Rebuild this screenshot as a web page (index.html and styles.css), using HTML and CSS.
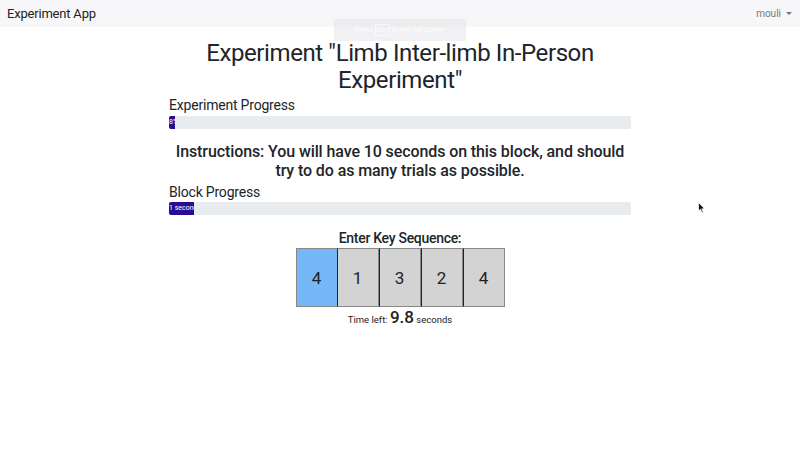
FILE: index.html
```html
<!DOCTYPE html>
<html>
<head>
<meta charset="utf-8">
<link rel="stylesheet" href="styles.css">
</head>
<body>
<nav class="navbar">
  <span class="brand">Experiment App</span>
  <span class="user">mouli <span class="caret"></span></span>
</nav>
<div class="toast">Press <span class="key">Esc</span> to exit full screen</div>
<main class="container">
  <h1 class="title">Experiment "Limb Inter-limb In-Person Experiment"</h1>
  <h2 class="label">Experiment Progress</h2>
  <div class="progress"><div class="bar" style="width:6px">8%</div></div>
  <h3 class="instructions">Instructions: You will have 10 seconds on this block, and should try to do as many trials as possible.</h3>
  <h2 class="label label-block">Block Progress</h2>
  <div class="progress"><div class="bar" style="width:25px">1 seconds</div></div>
  <h2 class="seq-title">Enter Key Sequence:</h2>
  <div class="keys">
    <div class="key-box active">4</div>
    <div class="key-box">1</div>
    <div class="key-box">3</div>
    <div class="key-box">2</div>
    <div class="key-box">4</div>
  </div>
  <p class="timer">Time left: <span class="time">9.8</span> seconds</p>
</main>
<svg class="cursor" width="8" height="12" viewBox="0 0 8 12"><path d="M0.5 0.5 L0.5 9 L2.5 7.2 L4 10.8 L5.3 10.2 L3.9 6.8 L6.6 6.8 Z" fill="#111" stroke="#fff" stroke-width="0.8"/></svg>
</body>
</html>
```
FILE: styles.css
```css
html, body {
  margin: 0;
  padding: 0;
  background: #ffffff;
  font-family: Roboto, "Liberation Sans", sans-serif;
  color: #212529;
}
.navbar {
  height: 27px;
  background: #f7f7f9;
  display: flex;
  align-items: center;
  justify-content: space-between;
  padding: 0 8px 0 7px;
}
.brand {
  font-size: 13px;
  color: #222;
  letter-spacing: -0.2px;
}
.user {
  font-size: 10px;
  color: #777;
  display: flex;
  align-items: center;
  gap: 5px;
}
.caret {
  width: 0;
  height: 0;
  border-left: 3px solid transparent;
  border-right: 3px solid transparent;
  border-top: 3px solid #777;
}
.toast {
  position: absolute;
  left: 334px;
  top: 19px;
  width: 132px;
  height: 22px;
  background: rgba(225, 225, 228, 0.45);
  color: rgba(255, 255, 255, 0.8);
  font-size: 7px;
  display: flex;
  align-items: center;
  justify-content: center;
  gap: 2px;
}
.toast .key {
  border: 1px solid rgba(255,255,255,0.6);
  padding: 1px 1px;
}
.container {
  width: 462px;
  margin: 0 auto;
}
.title {
  font-size: 24px;
  font-weight: 400;
  letter-spacing: -0.4px;
  line-height: 27px;
  text-align: center;
  margin: 13px 0 0;
}
.label {
  font-size: 14px;
  font-weight: 400;
  letter-spacing: -0.2px;
  margin: 2px 0 2px;
  line-height: 18px;
}
.label-block {
  margin-top: 3px;
  margin-bottom: 1px;
}
.progress {
  height: 13px;
  background: #e9ecef;
  border-radius: 2px;
  overflow: hidden;
  display: flex;
}
.bar {
  background: #2b0b91;
  color: #fff;
  font-size: 7px;
  line-height: 13px;
  white-space: nowrap;
  overflow: hidden;
  text-align: center;
}
.instructions {
  font-size: 16px;
  font-weight: 500;
  letter-spacing: -0.1px;
  line-height: 19px;
  text-align: center;
  margin: 13px 0 0;
}
.seq-title {
  font-size: 14px;
  font-weight: 500;
  letter-spacing: -0.3px;
  text-align: center;
  margin: 14px 0 1px;
  line-height: 18px;
}
.keys {
  display: flex;
  justify-content: center;
}
.key-box {
  width: 40px;
  height: 57px;
  background: #d3d3d3;
  border: 1px solid #888;
  border-left: 1px solid #222;
  font-size: 17px;
  display: flex;
  align-items: center;
  justify-content: center;
  color: #222;
}
.key-box:first-child {
  border-left: 1px solid #888;
}
.key-box.active {
  background: #74b8f8;
  border-right: 1px solid #222;
}
.key-box.active + .key-box {
  border-left: none;
}
.timer {
  text-align: center;
  font-size: 9.5px;
  margin: 0;
  color: #222;
}
.time {
  font-size: 17px;
  font-weight: 500;
}
.cursor {
  position: absolute;
  left: 698px;
  top: 202px;
}
```
